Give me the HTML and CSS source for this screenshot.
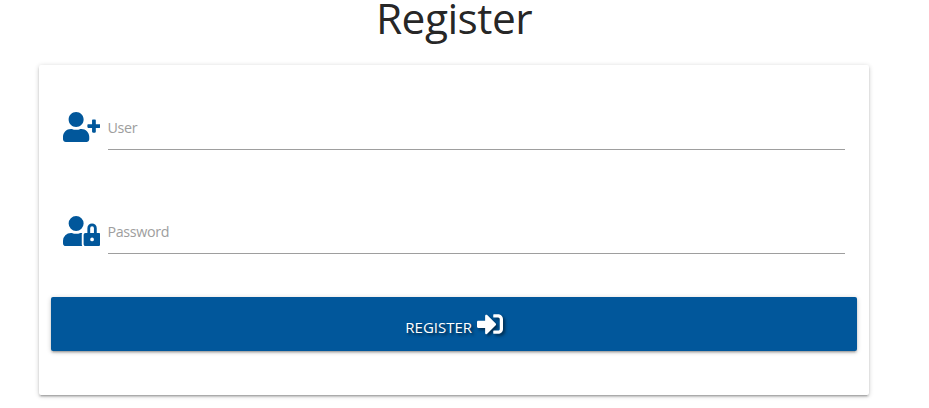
FILE: index.html
```html
<!DOCTYPE html>
<html lang="en">
<head>
<meta charset="utf-8">
<title>Register</title>
<link rel="stylesheet" href="styles.css">
</head>
<body>
<main class="container">
  <h1 class="title">Register</h1>
  <form class="card">
    <div class="field">
      <svg class="field-icon" viewBox="0 0 640 512"><path d="M624 208h-64v-64c0-8.800-7.200-16-16-16h-32c-8.800 0-16 7.200-16 16v64h-64c-8.800 0-16 7.200-16 16v32c0 8.800 7.200 16 16 16h64v64c0 8.800 7.200 16 16 16h32c8.800 0 16-7.200 16-16v-64h64c8.800 0 16-7.200 16-16v-32c0-8.800-7.200-16-16-16zm-400 48c70.700 0 128-57.300 128-128S294.700 0 224 0 96 57.300 96 128s57.300 128 128 128zm89.600 32h-16.700c-22.200 10.200-46.900 16-72.900 16s-50.600-5.800-72.900-16h-16.700C60.200 288 0 348.200 0 422.400V464c0 26.500 21.500 48 48 48h352c26.500 0 48-21.500 48-48v-41.600c0-74.200-60.200-134.400-134.400-134.400z"/></svg>
      <label class="input"><span class="label">User</span></label>
    </div>
    <div class="field">
      <svg class="field-icon" viewBox="0 0 640 512"><path d="M224 256A128 128 0 1 0 96 128a128 128 0 0 0 128 128zm96 64a63.080 63.080 0 0 1 8.100-30.500c-4.800-.5-9.500-1.500-14.500-1.500h-16.700a174.080 174.080 0 0 1-145.800 0h-16.700A134.430 134.430 0 0 0 0 422.400V464a48 48 0 0 0 48 48h280.900a63.540 63.540 0 0 1-8.900-32zm288-32h-32v-80a80 80 0 0 0-160 0v80h-32a32 32 0 0 0-32 32v160a32 32 0 0 0 32 32h224a32 32 0 0 0 32-32V320a32 32 0 0 0-32-32zM496 432a32 32 0 1 1 32-32 32 32 0 0 1-32 32zm32-144h-64v-80a32 32 0 0 1 64 0z"/></svg>
      <label class="input"><span class="label">Password</span></label>
    </div>
    <button class="submit" type="button">
      <span class="submit-text">REGISTER</span>
      <svg class="submit-icon" viewBox="0 0 512 512"><path d="M416 448h-84c-6.600 0-12-5.400-12-12v-40c0-6.600 5.400-12 12-12h84c17.700 0 32-14.300 32-32V160c0-17.700-14.300-32-32-32h-84c-6.600 0-12-5.400-12-12V76c0-6.600 5.400-12 12-12h84c53 0 96 43 96 96v192c0 53-43 96-96 96zm-47-201L201 79c-15-15-41-4.500-41 17v96H24c-13.300 0-24 10.700-24 24v96c0 13.300 10.700 24 24 24h136v96c0 21.500 26 32 41 17l168-168c9.300-9.400 9.300-24.600 0-34z"/></svg>
    </button>
  </form>
</main>
</body>
</html>
```
FILE: styles.css
```css
* { box-sizing: border-box; }
body {
  margin: 0;
  height: 408px;
  overflow: hidden;
  background: #fff;
  font-family: "Open Sans", "Noto Sans", sans-serif;
}
.container {
  width: 830px;
  margin-left: 39px;
}
.title {
  margin: 0 0 27px;
  height: 38px;
  line-height: 36px;
  font-size: 42.500px;
  font-weight: 400;
  letter-spacing: -0.550px;
  text-align: center;
  color: rgba(0, 0, 0, 0.87);
}
.card {
  height: 330px;
  padding: 42px 12px 0;
  border-radius: 2px;
  background: #fff;
  box-shadow: 0 2px 2px 0 rgba(0, 0, 0, 0.14), 0 3px 1px -2px rgba(0, 0, 0, 0.12), 0 1px 5px 0 rgba(0, 0, 0, 0.2);
}
.field {
  display: flex;
  height: 43px;
  margin: 0 12px 61px 11.500px;
}
.field-icon {
  width: 37.500px;
  height: 30px;
  margin: 5px 8px 0 0;
  fill: #01579b;
}
.input {
  flex: 1;
  border-bottom: 1px solid #9e9e9e;
}
.label {
  display: block;
  margin-left: -0.500px;
  line-height: 41px;
  font-size: 14.300px;
  letter-spacing: -0.350px;
  color: #9e9e9e;
}
.submit {
  display: flex;
  align-items: center;
  justify-content: center;
  width: 100%;
  height: 54px;
  margin-top: -18px;
  padding: 0;
  border: 0;
  border-radius: 2px;
  background: #01579b;
  box-shadow: 0 2px 2px 0 rgba(0, 0, 0, 0.14), 0 3px 1px -2px rgba(0, 0, 0, 0.12), 0 1px 5px 0 rgba(0, 0, 0, 0.2);
  color: #fff;
  font-family: inherit;
  font-size: 15px;
  text-shadow: 2px 2px 3px rgba(0, 0, 0, 0.6);
}
.submit-text {
  margin: 6px 4.500px 0 0;
  letter-spacing: 0;
}
.submit-icon {
  width: 26px;
  height: 26px;
  margin-top: -1px;
  fill: #fff;
  filter: drop-shadow(2px 2px 1.500px rgba(0, 0, 0, 0.5));
}
```
